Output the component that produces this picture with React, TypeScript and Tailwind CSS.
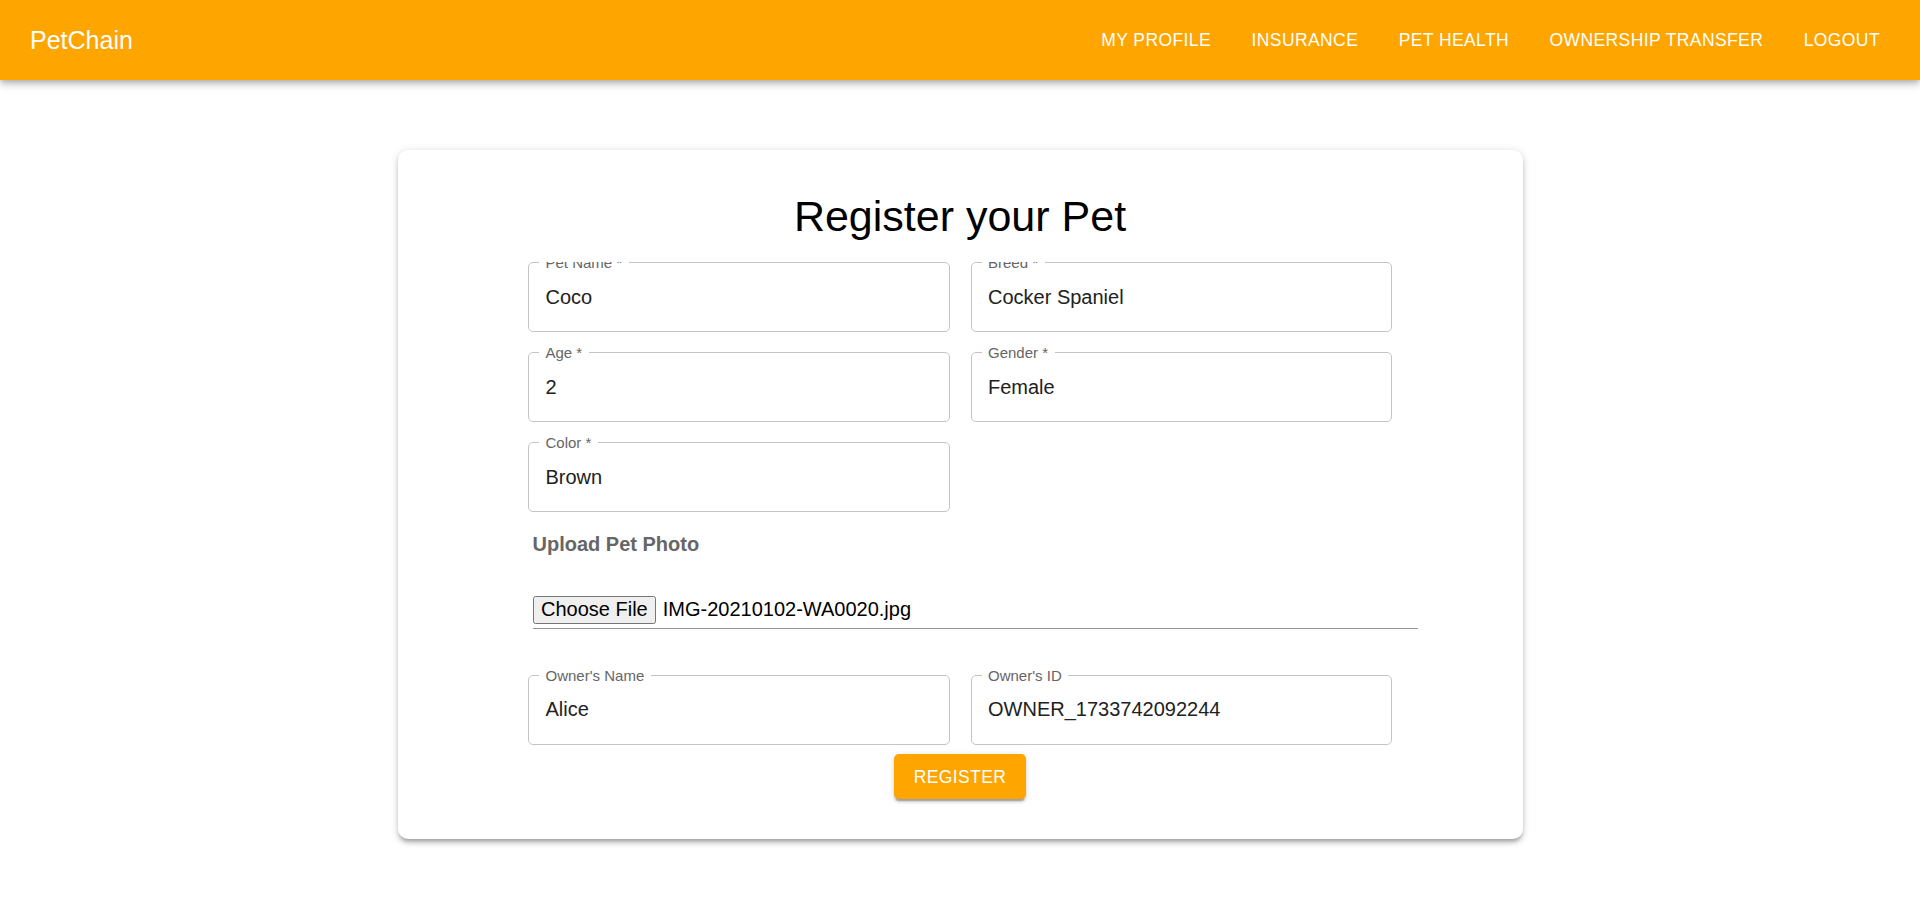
import React from "react";

function Field({ label, value }: { label: string; value: string }) {
  return (
    <div className="relative flex h-[70px] items-center rounded-[5px] border border-[#c4c4c4] pl-[16.5px]">
      <span className="absolute left-[10px] top-[-8px] whitespace-nowrap bg-white px-[6.5px] text-[15px] leading-[15px] text-[#666666]">
        {label}
      </span>
      <span className="text-[20px] leading-[23px] text-[#212121]">{value}</span>
    </div>
  );
}

export default function App() {
  const nav = ["My Profile", "Insurance", "Pet Health", "Ownership Transfer", "Logout"];
  return (
    <div className="min-h-[910px] bg-white font-['Liberation_Sans',Arial,sans-serif]">
      <header className="relative z-10 flex h-[80px] items-center justify-between bg-[#ffa500] px-[30px] text-white shadow-[0_2.5px_5px_-1.25px_rgba(0,0,0,0.2),0_5px_6.25px_0_rgba(0,0,0,0.14),0_1.25px_12.5px_0_rgba(0,0,0,0.12)]">
        <div className="text-[25px] leading-[40px]">PetChain</div>
        <nav className="flex items-center gap-[20.5px]">
          {nav.map((n) => (
            <button
              key={n}
              className="px-[10px] py-[7.5px] text-[17.5px] uppercase leading-[30px] tracking-[0.4px] text-white"
            >
              {n}
            </button>
          ))}
        </nav>
      </header>

      <main className="pt-[70px]">
        <div className="mx-auto w-[1125px] rounded-[10px] bg-white pb-[40px] pt-[40px] shadow-[0_3.75px_3.75px_-2.5px_rgba(0,0,0,0.2),0_3.75px_5px_0_rgba(0,0,0,0.14),0_1.25px_10px_0_rgba(0,0,0,0.12)]">
          <h1 className="text-center text-[43px] leading-[52.5px] text-black">Register your Pet</h1>

          <div className="ml-[130.5px] mt-[19.5px] w-[890px] overflow-hidden">
            <div className="grid grid-cols-[421.5px_421.5px] gap-x-[21px] gap-y-[20px]">
              <Field label="Pet Name *" value="Coco" />
              <Field label="Breed *" value="Cocker Spaniel" />
              <Field label="Age *" value="2" />
              <Field label="Gender *" value="Female" />
              <Field label="Color *" value="Brown" />
            </div>

            <div className="ml-[4.5px] w-[885px]">
              <div className="mt-[22.4px] text-[20px] font-bold leading-[20px] text-[#666666]">Upload Pet Photo</div>
              <div className="mt-[41.3px] flex items-center border-b border-[#949494] pb-[4.6px]">
                <span className="flex h-[28px] items-center rounded-[2.5px] border border-[#767676] bg-[#efefef] px-[7.5px] text-[20px] leading-[23px] text-black">
                  Choose File
                </span>
                <span className="ml-[6.5px] text-[20px] leading-[23px] text-black">IMG-20210102-WA0020.jpg</span>
              </div>
            </div>

            <div className="mt-[45.6px] grid grid-cols-[421.5px_421.5px] gap-x-[21px]">
              <Field label="Owner's Name" value="Alice" />
              <Field label="Owner's ID" value="OWNER_1733742092244" />
            </div>
          </div>

          <div className="mt-[9.5px] flex justify-center">
            <button className="h-[45px] rounded-[5px] bg-[#ffa500] px-[20px] text-[17.5px] uppercase tracking-[0.4px] text-white shadow-[0_3.75px_1.25px_-2.5px_rgba(0,0,0,0.2),0_2.5px_2.5px_0_rgba(0,0,0,0.14),0_1.25px_6.25px_0_rgba(0,0,0,0.12)]">
              Register
            </button>
          </div>
        </div>
      </main>
    </div>
  );
}
